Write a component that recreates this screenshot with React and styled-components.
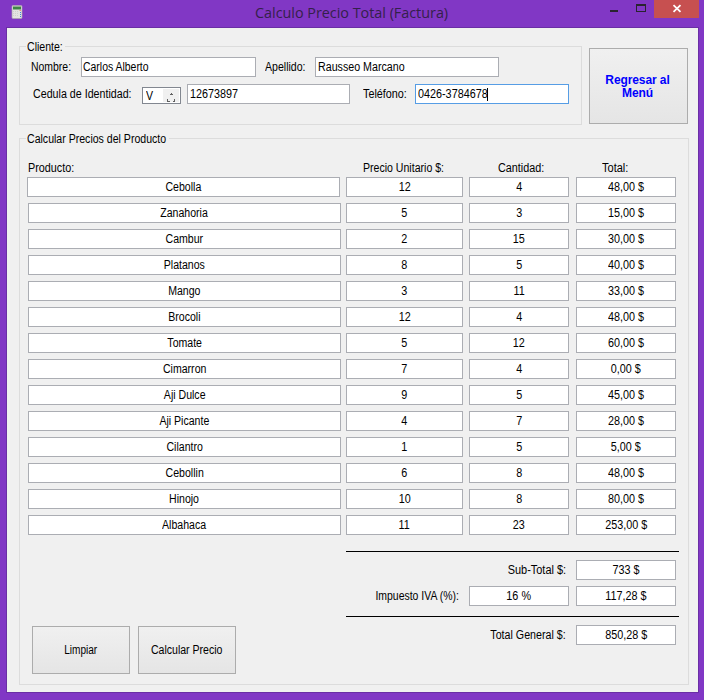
import React from "react";
import styled, { createGlobalStyle } from "styled-components";

const GlobalStyle = createGlobalStyle`
  * { box-sizing: border-box; }
  body { margin: 0; background: #8137c5; }
`;

const Window = styled.div`
  width: 704px;
  height: 700px;
  padding: 0 5px 7px 6px;
  background: #8137c5;
  font-family: "Liberation Sans", Arial, sans-serif;
  font-size: 12px;
  line-height: 14px;
  color: #000;
  overflow: hidden;
`;

const TitleBar = styled.header`
  display: flex;
  height: 27px;
`;

const AppIcon = styled.svg`
  flex: none;
  width: 12px;
  height: 14px;
  margin: 5px 0 0 5px;
`;

const Title = styled.h1`
  flex: none;
  width: 196px;
  margin: 3px 0 0 232px;
  font: 400 14.4px/20px "Open Sans", "Noto Sans", sans-serif;
  letter-spacing: -0.02px;
  white-space: nowrap;
  color: #34204b;
`;

const WindowControls = styled.div`
  display: flex;
  margin-left: auto;
  height: 18px;
`;

const ControlIcon = styled.svg`
  display: block;
  width: ${(p) => p.$w}px;
  height: 18px;
  background: ${(p) => p.$bg || "transparent"};
`;

const Client = styled.main`
  height: 666px;
  padding: 11px 9px 0 12px;
  border: 1px solid #6a2ea5;
  background: #f0f0f0;
`;

const TopRow = styled.div`
  display: flex;
  height: 85px;
`;

const Group = styled.section`
  width: ${(p) => p.$w}px;
  height: ${(p) => p.$h}px;
  margin-top: ${(p) => p.$mt}px;
  border: 1px solid #dcdcdc;
`;

const Legend = styled.h2`
  width: ${(p) => p.$w}px;
  height: 14px;
  margin: -7px 0 0 6px;
  padding-left: 1px;
  background: #f0f0f0;
  font: inherit;
  white-space: nowrap;
`;

const Text = styled.span`
  display: inline-block;
  flex: none;
  white-space: pre;
  transform: scaleX(${(p) => p.$s || 0.88});
  transform-origin: ${(p) => p.$from || "left"} center;
`;

const FieldRow = styled.div`
  display: flex;
  align-items: flex-start;
  margin-top: ${(p) => p.$mt || 0}px;
  padding-left: ${(p) => p.$pl || 0}px;
`;

const Label = styled.label`
  flex: none;
  width: ${(p) => p.$w}px;
  padding-top: 3px;
`;

const Field = styled.div`
  flex: none;
  display: flex;
  justify-content: ${(p) => (p.$left ? "flex-start" : "center")};
  width: ${(p) => p.$w}px;
  height: 20px;
  margin-right: ${(p) => p.$mr || 0}px;
  padding: 2px 0 0 ${(p) => p.$left || 0}px;
  border: 1px solid ${(p) => (p.$focus ? "#569de5" : "#abadb3")};
  background: #fff;
`;

const Caret = styled.i`
  width: 1px;
  height: 13px;
  margin-left: -8px;
  margin-top: 1px;
  background: #000;
`;

const Spinner = styled.div`
  display: flex;
  justify-content: space-between;
  width: 39px;
  height: 17px;
  margin: 3px 6px 0 0;
  padding: 1px 1px 1px 3px;
  border: 1px solid #828790;
  background: #fff;
`;

const SpinIcon = styled.svg`
  width: 16px;
  height: 13px;
  background: #f0f0f0;
`;

const Button = styled.button`
  display: flex;
  flex: none;
  align-items: center;
  justify-content: center;
  width: ${(p) => p.$w}px;
  height: ${(p) => p.$h}px;
  margin: ${(p) => p.$m || "0"};
  padding: 0;
  border: 1px solid #acacac;
  border-radius: 0;
  background: linear-gradient(#f0f0f0, #e5e5e5);
  font: inherit;
  color: inherit;
`;

const MenuText = styled.span`
  padding: 2px 2px 0 0;
  font-weight: 700;
  font-size: 12px;
  line-height: 13px;
  letter-spacing: -0.1px;
  color: #0000ff;
  text-align: center;
`;

const Columns = styled.div`
  display: grid;
  grid-template-columns: 318px 123px 107px 100px;
  margin: ${(p) => p.$m};
`;

const Heading = styled.div`
  padding-left: ${(p) => p.$pl}px;
  height: 16px;
`;

const ProductCell = styled.div`
  margin-left: ${(p) => (p.$first ? -1 : 0)}px;
`;

const Footer = styled.div`
  display: flex;
  padding: 10px 0 0 12px;
`;

const Actions = styled.div`
  display: flex;
  width: 314px;
  padding-top: 75px;
`;

const Summary = styled.div`
  width: 333px;
`;

const Rule = styled.hr`
  width: 333px;
  height: 1px;
  margin: 0 0 8px;
  border: 0;
  background: #000;
`;

const SummaryRow = styled.div`
  display: flex;
  justify-content: flex-end;
  height: 20px;
  margin-bottom: ${(p) => p.$mb}px;
  padding-right: 3px;
`;

const SummaryLabel = styled.div`
  padding: 3px ${(p) => p.$gap}px 0 0;
`;

const products = [
  ["Cebolla", "12", "4", "48,00 $"],
  ["Zanahoria", "5", "3", "15,00 $"],
  ["Cambur", "2", "15", "30,00 $"],
  ["Platanos", "8", "5", "40,00 $"],
  ["Mango", "3", "11", "33,00 $"],
  ["Brocoli", "12", "4", "48,00 $"],
  ["Tomate", "5", "12", "60,00 $"],
  ["Cimarron", "7", "4", "0,00 $"],
  ["Aji Dulce", "9", "5", "45,00 $"],
  ["Aji Picante", "4", "7", "28,00 $"],
  ["Cilantro", "1", "5", "5,00 $"],
  ["Cebollin", "6", "8", "48,00 $"],
  ["Hinojo", "10", "8", "80,00 $"],
  ["Albahaca", "11", "23", "253,00 $"],
];

const Value = ({ w, mr, children }) => (
  <Field $w={w} $mr={mr}>
    <Text $from="center" $s={0.9}>{children}</Text>
  </Field>
);

function Calculator() {
  return (
    <AppIcon viewBox="0 0 12 14">
      <rect x="1" y="0.5" width="10" height="13" rx="1" fill="#e4e2e0" stroke="#aaa5ae" strokeWidth=".7" />
      <rect x="2" y="1.5" width="8" height="3" fill="#3f8545" />
      <path d="M2 6.5h6M2 8.5h6M2 10.5h6" stroke="#cfcfcf" strokeDasharray="1 1" />
      <path d="M8.5 5.5h1.5" stroke="#e69078" />
      <path d="M9 7.5h1M9 9.5h1M9 11.5h1" stroke="#3b8ad0" />
    </AppIcon>
  );
}

export default function App() {
  return (
    <>
      <GlobalStyle />
      <Window>
        <TitleBar>
          <Calculator />
          <Title>Calculo Precio Total (Factura)</Title>
          <WindowControls>
            <ControlIcon $w={26} viewBox="0 0 26 18" shapeRendering="crispEdges">
              <path d="M10 10h8v2h-8z" fill="#292330" />
            </ControlIcon>
            <ControlIcon $w={28} viewBox="0 0 28 18" shapeRendering="crispEdges">
              <path d="M10 4h10v8h-10zM11 6v5h8v-5z" fill="#292330" fillRule="evenodd" />
            </ControlIcon>
            <ControlIcon $w={45} $bg="#c75050" viewBox="0 0 45 18">
              <path d="M19.5 5.2l7 6.6M26.5 5.2l-7 6.6" stroke="#fff" strokeWidth="1.8" />
            </ControlIcon>
          </WindowControls>
        </TitleBar>
        <Client>
          <TopRow>
            <Group $w={563} $h={79} $mt={7}>
              <Legend $w={39}><Text>Cliente:</Text></Legend>
              <FieldRow $mt={3} $pl={11}>
                <Label $w={50}><Text $s={0.87}>Nombre:</Text></Label>
                <Field $w={175} $mr={9} $left={1}><Text $s={0.87}>Carlos Alberto</Text></Field>
                <Label $w={50}><Text>Apellido:</Text></Label>
                <Field $w={184} $left={2}><Text $s={0.89}>Rausseo Marcano</Text></Field>
              </FieldRow>
              <FieldRow $mt={7} $pl={13}>
                <Label $w={109}><Text $s={0.89}>Cedula de Identidad:</Text></Label>
                <Spinner>
                  <Text>V</Text>
                  <SpinIcon viewBox="0 0 16 13" shapeRendering="crispEdges">
                    <path d="M7 5h1v-1h1v1h1v1h-3zM4 10h1v2h2v1h-3zM11 10h1v3h-2v-1h1z" fill="#606060" />
                  </SpinIcon>
                </Spinner>
                <Field $w={163} $mr={13} $left={2}><Text $s={0.9}>12673897</Text></Field>
                <Label $w={52}><Text $s={0.9}>Teléfono:</Text></Label>
                <Field $w={154} $left={2} $focus>
                  <Text $s={0.9}>0426-3784678</Text>
                  <Caret />
                </Field>
              </FieldRow>
            </Group>
            <Button $w={99} $h={76} $m="9px 0 0 7px">
              <MenuText>Regresar al<br />Menú</MenuText>
            </Button>
          </TopRow>
          <Group $w={670} $h={547} $mt={14}>
            <Legend $w={143}><Text>Calcular Precios del Producto</Text></Legend>
            <Columns $m="15px 0 0 8px">
              <Heading $pl={0}><Text $s={0.9}>Producto:</Text></Heading>
              <Heading $pl={17}><Text>Precio Unitario $:</Text></Heading>
              <Heading $pl={29}><Text $s={0.9}>Cantidad:</Text></Heading>
              <Heading $pl={26}><Text $s={0.92}>Total:</Text></Heading>
            </Columns>
            {products.map(([name, price, qty, total], i) => (
              <Columns key={name} $m="0 0 6px 8px">
                <ProductCell $first={i === 0}>
                  <Field $w={313}><Text $from="center">{name}</Text></Field>
                </ProductCell>
                <Value w={117}>{price}</Value>
                <Value w={100}>{qty}</Value>
                <Value w={100}>{total}</Value>
              </Columns>
            ))}
            <Footer>
              <Actions>
                <Button $w={98} $h={48}><Text $from="center" $s={0.84}>Limpiar</Text></Button>
                <Button $w={98} $h={48} $m="0 0 0 8px"><Text $from="center">Calcular Precio</Text></Button>
              </Actions>
              <Summary>
                <Rule />
                <SummaryRow $mb={6}>
                  <SummaryLabel $gap={10}><Text $from="right" $s={0.91}>Sub-Total $:</Text></SummaryLabel>
                  <Value w={100}>733 $</Value>
                </SummaryRow>
                <SummaryRow $mb={10}>
                  <SummaryLabel $gap={10}><Text $from="right" $s={0.87}>Impuesto IVA (%):</Text></SummaryLabel>
                  <Value w={100} mr={7}>16 %</Value>
                  <Value w={100}>117,28 $</Value>
                </SummaryRow>
                <Rule />
                <SummaryRow $mb={0}>
                  <SummaryLabel $gap={10}><Text $from="right" $s={0.89}>Total General $:</Text></SummaryLabel>
                  <Value w={100}>850,28 $</Value>
                </SummaryRow>
              </Summary>
            </Footer>
          </Group>
        </Client>
      </Window>
    </>
  );
}
